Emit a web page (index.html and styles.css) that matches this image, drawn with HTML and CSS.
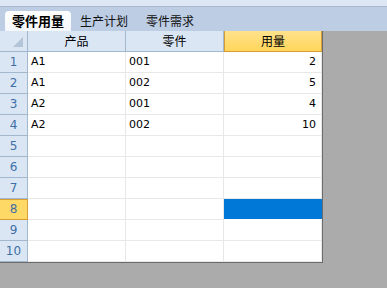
FILE: index.html
```html
<!DOCTYPE html>
<html lang="zh-CN">
<head>
    <meta charset="utf-8">
    <title>零件用量</title>
    <meta name="viewport" content="width=device-width, initial-scale=1">
    <link rel="stylesheet" href="styles.css">
</head>
<body>
    <div class="titlebar"></div>
    <div class="tabs">
        <div class="tab active">零件用量</div>
        <div class="tab">生产计划</div>
        <div class="tab">零件需求</div>
    </div>
    <div class="sheet">
        <div class="grid">
            <div class="corner"><span class="corner-mark"></span></div>
            <div class="col-head">产品</div>
            <div class="col-head">零件</div>
            <div class="col-head selected">用量</div>

            <div class="row-head">1</div>
            <div class="cell">A1</div>
            <div class="cell">001</div>
            <div class="cell num">2</div>

            <div class="row-head">2</div>
            <div class="cell">A1</div>
            <div class="cell">002</div>
            <div class="cell num">5</div>

            <div class="row-head">3</div>
            <div class="cell">A2</div>
            <div class="cell">001</div>
            <div class="cell num">4</div>

            <div class="row-head">4</div>
            <div class="cell">A2</div>
            <div class="cell">002</div>
            <div class="cell num">10</div>

            <div class="row-head">5</div>
            <div class="cell"></div>
            <div class="cell"></div>
            <div class="cell"></div>

            <div class="row-head">6</div>
            <div class="cell"></div>
            <div class="cell"></div>
            <div class="cell"></div>

            <div class="row-head">7</div>
            <div class="cell"></div>
            <div class="cell"></div>
            <div class="cell"></div>

            <div class="row-head selected">8</div>
            <div class="cell"></div>
            <div class="cell"></div>
            <div class="cell active"></div>

            <div class="row-head">9</div>
            <div class="cell"></div>
            <div class="cell"></div>
            <div class="cell"></div>

            <div class="row-head">10</div>
            <div class="cell"></div>
            <div class="cell"></div>
            <div class="cell"></div>
        </div>
    </div>
</body>
</html>
```

FILE: styles.css
```css
:root {
    --strip-color: #dee8f4;
    --tabbar-color: #bccde4;
    --head-color: #dae6f4;
    --head-border: #a3b7ce;
    --head-text: #3e6fa6;
    --grid-line: #e8e8e8;
    --pick-color: #ffd966;
    --pick-border: #d99d36;
    --cell-select: #0078d7;
    --backdrop: #ababab;
}

* {
    margin: 0;
    padding: 0;
    box-sizing: border-box;
}

body {
    background-color: var(--backdrop);
    font-family: "Noto Sans CJK SC", "DejaVu Sans", sans-serif;
    font-size: 12px;
    color: #000;
    width: 387px;
    height: 288px;
    overflow: hidden;
}

.titlebar {
    height: 7px;
    background-color: var(--strip-color);
    border-bottom: 1px solid #a7b8cd;
}

.tabs {
    height: 24px;
    background-color: var(--tabbar-color);
    display: flex;
    align-items: flex-end;
    padding-left: 5px;
}

.tab {
    height: 20px;
    line-height: 19px;
    padding: 0 9px;
    font-size: 12px;
    color: #111;
}

.tab.active {
    background: linear-gradient(#ffffff, #f4f7fb);
    border-radius: 4px 4px 0 0;
    padding: 0 7px;
    font-size: 13px;
    font-weight: bold;
    color: #000;
}

.sheet {
    width: 323px;
    background-color: #fff;
    border-right: 1px solid #6b6b6b;
    border-bottom: 1px solid #6b6b6b;
}

.grid {
    display: grid;
    grid-template-columns: 28px 98px 98px 98px;
    grid-auto-rows: 21px;
}

.corner,
.col-head,
.row-head {
    background-color: var(--head-color);
    border-right: 1px solid var(--head-border);
    border-bottom: 1px solid var(--head-border);
}

.corner {
    position: relative;
}

.corner-mark {
    position: absolute;
    right: 4px;
    bottom: 4px;
    width: 0;
    height: 0;
    border-left: 10px solid transparent;
    border-bottom: 10px solid #b4c4d8;
}

.col-head {
    text-align: center;
    line-height: 20px;
    font-size: 12px;
}

.col-head.selected {
    background: linear-gradient(#ffe28c, #ffd55a);
    border: 1px solid var(--pick-border);
    border-top: none;
    line-height: 19px;
}

.row-head {
    text-align: center;
    line-height: 20px;
    color: var(--head-text);
    font-family: "DejaVu Sans", sans-serif;
    font-size: 12px;
}

.row-head.selected {
    background-color: var(--pick-color);
    border: 1px solid var(--pick-border);
    border-left: none;
    line-height: 19px;
}

.cell {
    border-right: 1px solid var(--grid-line);
    border-bottom: 1px solid var(--grid-line);
    padding: 0 3px;
    line-height: 20px;
    font-family: "DejaVu Sans", sans-serif;
    font-size: 11px;
    white-space: nowrap;
}

.cell.num {
    text-align: right;
    padding-right: 5px;
}

.cell.active {
    background-color: var(--cell-select);
    border-color: #fff;
    border-right: none;
}
```
